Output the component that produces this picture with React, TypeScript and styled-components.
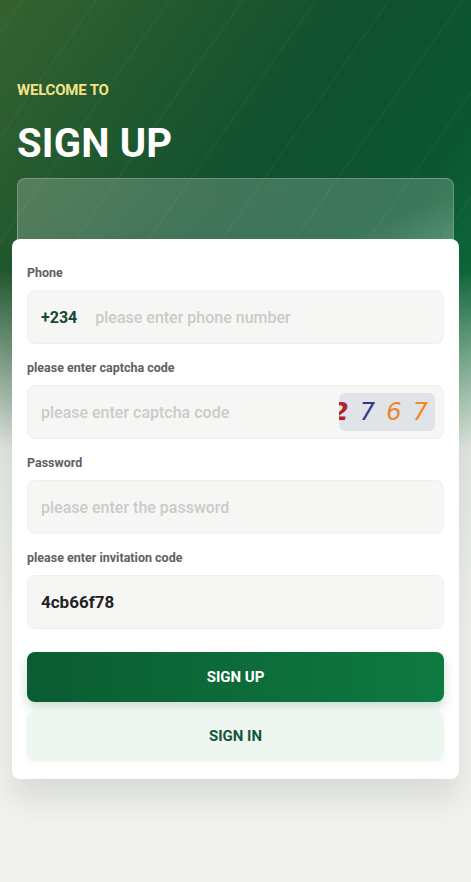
import React from "react";
import styled, { createGlobalStyle } from "styled-components";

const GlobalStyle = createGlobalStyle`
  html, body {
    margin: 0;
    padding: 0;
    background: #f1f2ee;
  }
  * {
    box-sizing: border-box;
  }
  body {
    font-family: Roboto, "Noto Sans", "Liberation Sans", sans-serif;
  }
`;

const captchaDigits = [
  { char: "2", color: "#b0232b" },
  { char: "7", color: "#2e3a8c" },
  { char: "6", color: "#e8862a" },
  { char: "7", color: "#ef8a1c" },
];

export default function App() {
  return (
    <Page>
      <GlobalStyle />
      <Header>
        <Welcome>WELCOME TO</Welcome>
        <Title>SIGN UP</Title>
      </Header>

      <Glass />

      <Card>
        <Field>
          <Label>Phone</Label>
          <InputBox>
            <Prefix>+234</Prefix>
            <Input placeholder="please enter phone number" />
          </InputBox>
        </Field>

        <Field>
          <Label>please enter captcha code</Label>
          <InputBox $withCaptcha>
            <Input placeholder="please enter captcha code" />
            <Captcha>
              {captchaDigits.map((d, i) => (
                <Digit key={i} $color={d.color} $first={i === 0}>
                  {d.char}
                </Digit>
              ))}
            </Captcha>
          </InputBox>
        </Field>

        <Field>
          <Label>Password</Label>
          <InputBox>
            <Input type="password" placeholder="please enter the password" />
          </InputBox>
        </Field>

        <Field>
          <Label>please enter invitation code</Label>
          <InputBox>
            <Input $filled defaultValue="4cb66f78" />
          </InputBox>
        </Field>

        <Actions>
          <PrimaryButton>SIGN UP</PrimaryButton>
          <SecondaryButton>SIGN IN</SecondaryButton>
        </Actions>
      </Card>
    </Page>
  );
}

const Page = styled.div`
  min-height: 882px;
  width: 100%;
  overflow: hidden;
  background:
    repeating-linear-gradient(
      -55deg,
      rgba(255, 255, 255, 0) 0px,
      rgba(255, 255, 255, 0) 58px,
      rgba(255, 255, 255, 0.05) 59px,
      rgba(255, 255, 255, 0) 60px
    ) top / 100% 300px no-repeat,
    linear-gradient(
      180deg,
      rgba(241, 242, 238, 0) 0px,
      rgba(241, 242, 238, 0) 270px,
      rgba(227, 231, 225, 1) 450px,
      rgba(241, 242, 238, 1) 630px
    ),
    linear-gradient(125deg, #35622f 0%, #11512f 45%, #0b5632 70%, #157b45 100%) top / 100% 460px no-repeat,
    #f1f2ee;
  padding-bottom: 100px;
`;

const Header = styled.div`
  padding: 82px 17px 0;
  display: flex;
  flex-direction: column;
`;

const Welcome = styled.div`
  color: #f3e287;
  font-size: 15px;
  font-weight: 700;
  line-height: 16px;
  letter-spacing: -0.2px;
`;

const Title = styled.h1`
  margin: 22px 0 0;
  color: #ffffff;
  font-size: 40px;
  font-weight: 700;
  line-height: 48px;
  letter-spacing: 0.2px;
`;

const Glass = styled.div`
  margin: 10px 17px 0;
  height: 62px;
  border-radius: 8px 8px 0 0;
  background: linear-gradient(
    160deg,
    rgba(255, 255, 255, 0.22) 0%,
    rgba(255, 255, 255, 0.2) 80%,
    rgba(255, 255, 255, 0.3) 100%
  );
  border: 1px solid rgba(255, 255, 255, 0.2);
  border-bottom: none;
`;

const Card = styled.div`
  margin: -1px 12px 0;
  background: #ffffff;
  border-radius: 8px;
  padding: 26px 15px 18px;
  display: flex;
  flex-direction: column;
  gap: 16px;
  box-shadow: 0 20px 30px rgba(40, 60, 45, 0.12);
`;

const Field = styled.div`
  display: flex;
  flex-direction: column;
  gap: 9px;
`;

const Label = styled.div`
  color: #5e615f;
  font-size: 12.5px;
  font-weight: 700;
  line-height: 16px;
`;

const InputBox = styled.div<{ $withCaptcha?: boolean }>`
  height: 54px;
  border-radius: 8px;
  background: #f6f7f5;
  border: 1px solid #eff0ee;
  display: flex;
  align-items: center;
  padding: ${(p) => (p.$withCaptcha ? "0 8px 0 13px" : "0 13px")};
  gap: 18px;
`;

const Prefix = styled.span`
  color: #12492f;
  font-size: 16px;
  font-weight: 700;
`;

const Input = styled.input<{ $filled?: boolean }>`
  flex: 1;
  min-width: 0;
  border: none;
  outline: none;
  background: transparent;
  font-family: inherit;
  font-size: ${(p) => (p.$filled ? "17px" : "16px")};
  font-weight: ${(p) => (p.$filled ? 700 : 500)};
  color: #222;
  padding: 0;

  &::placeholder {
    color: #c9cbc8;
  }
`;

const Captcha = styled.div`
  width: 96px;
  height: 38px;
  border-radius: 6px;
  background: #e0e4e9;
  display: flex;
  align-items: center;
  justify-content: space-between;
  padding: 0 7px 0 0;
  overflow: hidden;
`;

const Digit = styled.span<{ $color: string; $first?: boolean }>`
  color: ${(p) => p.$color};
  font-family: "DejaVu Sans", sans-serif;
  font-size: 24px;
  font-style: italic;
  font-weight: ${(p) => (p.$first ? 700 : 500)};
  margin-left: ${(p) => (p.$first ? "-7px" : "0")};
`;

const Actions = styled.div`
  margin-top: 7px;
  display: flex;
  flex-direction: column;
  gap: 9px;
`;

const BaseButton = styled.button`
  height: 50px;
  width: 100%;
  border: none;
  border-radius: 8px;
  font-family: inherit;
  font-size: 15px;
  font-weight: 700;
  cursor: pointer;
`;

const PrimaryButton = styled(BaseButton)`
  color: #ffffff;
  background: linear-gradient(90deg, #0b5c32 0%, #0e7a41 100%);
  box-shadow: 0 6px 12px rgba(14, 110, 60, 0.22);
`;

const SecondaryButton = styled(BaseButton)`
  color: #14563a;
  background: #edf6ef;
  box-shadow: 0 2px 6px rgba(0, 0, 0, 0.04);
`;
